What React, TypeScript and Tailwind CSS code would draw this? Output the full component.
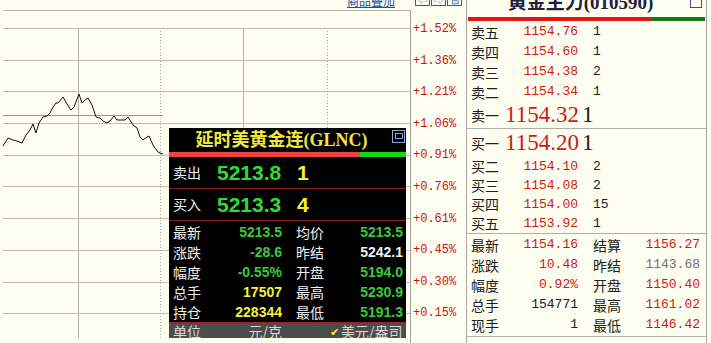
import React from "react";

const CJK = "font-['Noto_Sans_CJK_SC',sans-serif]";
const MONO = "font-['Liberation_Mono','Noto_Sans_CJK_SC',monospace]";

const axis = ["+1.52%", "+1.36%", "+1.21%", "+1.06%", "+0.91%", "+0.76%", "+0.61%", "+0.45%", "+0.30%", "+0.15%"];

const linePts =
  "3,146 8,138 13,140 17,141 22,143 26,135 30,130 33,124 36,133 39,123 43,117 47,116 50,113 53,107 56,103 58,103 63,97 67,104 71,110 74,107 79,94 82,103 85,100 88,98 92,105 96,117 100,118 103,121 107,123 110,121 114,116 117,120 125,120 128,117 133,125 137,128 140,137 143,140 147,137 149,136 153,145 155,148 158,152 160,153 163,154";

const gridY = [28.5, 60.5, 91.5, 123.5, 155.5, 186.5, 218.5, 250.5, 282.5, 313.5];

const asks = [
  ["卖五", "1154.76", "1"],
  ["卖四", "1154.60", "1"],
  ["卖三", "1154.38", "2"],
  ["卖二", "1154.34", "1"],
];
const bids = [
  ["买二", "1154.10", "2"],
  ["买三", "1154.08", "2"],
  ["买四", "1154.00", "15"],
  ["买五", "1153.92", "1"],
];

// [label, value, valueColor, label2, value2, value2Color]
const quote = [
  ["最新", "1154.16", "text-[#d01818]", "结算", "1156.27", "text-[#d01818]"],
  ["涨跌", "10.48", "text-[#d01818]", "昨结", "1143.68", "text-[#707070]"],
  ["幅度", "0.92%", "text-[#d01818]", "开盘", "1150.40", "text-[#d01818]"],
  ["总手", "154771", "text-[#202020]", "最高", "1161.02", "text-[#d01818]"],
  ["现手", "1", "text-[#202020]", "最低", "1146.42", "text-[#d01818]"],
];

const popStats = [
  ["最新", "5213.5", "text-[#3cc83c]", "均价", "5213.5", "text-[#3cc83c]"],
  ["涨跌", "-28.6", "text-[#3cc83c]", "昨结", "5242.1", "text-[#f0f0f0]"],
  ["幅度", "-0.55%", "text-[#3cc83c]", "开盘", "5194.0", "text-[#3cc83c]"],
  ["总手", "17507", "text-[#f4f040]", "最高", "5230.9", "text-[#3cc83c]"],
  ["持仓", "228344", "text-[#f4f040]", "最低", "5191.3", "text-[#3cc83c]"],
];

const Chart = () => (
  <svg width="410" height="333" viewBox="0 10 410 333" className="block shrink-0">
    <line x1="3" y1="10.5" x2="410" y2="10.5" stroke="#b8b8ac" />
    {gridY.map((y) => (
      <line key={y} x1="3" y1={y} x2="410" y2={y} stroke="#bdbdb0" />
    ))}
    <line x1="78.5" y1="28" x2="78.5" y2="338" stroke="#b4b4a8" />
    <line x1="243.5" y1="28" x2="243.5" y2="338" stroke="#b4b4a8" />
    <line x1="160.5" y1="28" x2="160.5" y2="338" stroke="#a8a8a0" strokeDasharray="1 2" />
    <line x1="327.5" y1="28" x2="327.5" y2="338" stroke="#a8a8a0" strokeDasharray="1 2" />
    <line x1="3" y1="115.5" x2="163" y2="115.5" stroke="#e48a10" />
    <polyline points={linePts} fill="none" stroke="#101010" strokeWidth="1" />
  </svg>
);

const Popup = () => (
  <div className={`absolute left-[169px] top-[128px] flex h-[210px] w-[237px] flex-col bg-black ${CJK}`}>
    <div className="relative flex h-[24px] shrink-0 items-center justify-center pr-[12px]">
      <span className="font-['Liberation_Serif','Noto_Sans_CJK_SC',serif] text-[18px] font-bold leading-none text-[#f0e838]">
        延时美黄金连(GLNC)
      </span>
      <div className="absolute right-[1px] top-[2px] flex h-[13px] w-[13px] items-start justify-center border border-[#8aa8d8] pt-[2px]">
        <div className="h-[6px] w-[8px] border border-[#8aa8d8]" />
      </div>
    </div>
    <div className="flex h-[5px] shrink-0">
      <div className="w-[191px] bg-[#f04444]" />
      <div className="flex-1 bg-[#14d814]" />
    </div>
    {[
      ["卖出", "5213.8", "1"],
      ["买入", "5213.3", "4"],
    ].map(([l, p, q]) => (
      <div key={l} className="flex h-[32px] shrink-0 items-center border-b border-[#902020] pl-[4px]">
        <span className="w-[44px] text-[14px] text-[#f0f0f0]">{l}</span>
        <span className="w-[80px] font-['Liberation_Sans',sans-serif] text-[21px] font-bold text-[#30dc30]">{p}</span>
        <span className="font-['Liberation_Sans',sans-serif] text-[21px] font-bold text-[#f4f030]">{q}</span>
      </div>
    ))}
    <div className="flex flex-col pt-[1px]">
      {popStats.map(([l, v, c, l2, v2, c2]) => (
        <div key={l} className="flex h-[20px] items-center pl-[4px] text-[14px]">
          <span className="w-[36px] text-[#f0f0f0]">{l}</span>
          <span className={`w-[73px] text-right font-['Liberation_Sans',sans-serif] font-bold ${c}`}>{v}</span>
          <span className="ml-[14px] w-[36px] text-[#f0f0f0]">{l2}</span>
          <span className={`w-[71px] text-right font-['Liberation_Sans',sans-serif] font-bold ${c2}`}>{v2}</span>
        </div>
      ))}
    </div>
    <div className="flex flex-1 items-start overflow-hidden border-t border-[#a02020] bg-[#4c4c4c] pl-[4px] text-[14px] leading-[17px] text-[#d8d8d8]">
      <span className="w-[36px]">单位</span>
      <span className="w-[73px] text-right">元/克</span>
      <span className="ml-[48px] w-[11px] text-[11px] text-[#f4f030]">✔</span>
      <span>美元/盎司</span>
    </div>
  </div>
);

const Book = () => (
  <div className={`flex w-[241px] shrink-0 flex-col border-x border-[#a8a8a0] text-[#202020] ${CJK}`}>
    <div className="relative flex h-[17px] shrink-0 justify-center overflow-hidden pr-[12px]">
      <span className="-mt-[7px] font-['Liberation_Serif','Noto_Sans_CJK_SC',serif] text-[19px] font-bold leading-[19px] text-[#20203a]">
        黄金主力(010590)
      </span>
      <div className="absolute right-[4px] top-[-4px] h-[12px] w-[12px] border border-[#505060]" />
    </div>
    <div className="mx-[1px] flex h-[4px] shrink-0">
      <div className="w-[184px] bg-[#e81414]" />
      <div className="flex-1 bg-[#187818]" />
    </div>
    <div className="flex flex-col border-b border-[#b0b0a8] pt-[1px] text-[14px]">
      {asks.map(([l, p, q]) => (
        <div key={l} className="flex h-[20px] items-center pl-[4px]">
          <span className="w-[34px]">{l}</span>
          <span className={`w-[73px] text-right text-[13px] text-[#d01818] ${MONO}`}>{p}</span>
          <span className={`ml-[15px] text-[13px] ${MONO}`}>{q}</span>
        </div>
      ))}
      <div className="flex h-[26px] items-center pl-[4px]">
        <span className="w-[34px]">卖一</span>
        <span className="font-['Liberation_Serif',serif] text-[23px] text-[#d01818]">1154.32</span>
        <span className="ml-[3px] font-['Liberation_Serif',serif] text-[23px]">1</span>
      </div>
    </div>
    <div className="flex flex-col border-b border-[#b0b0a8] text-[14px]">
      <div className="flex h-[28px] items-center pl-[4px]">
        <span className="w-[34px]">买一</span>
        <span className="font-['Liberation_Serif',serif] text-[23px] text-[#d01818]">1154.20</span>
        <span className="ml-[3px] font-['Liberation_Serif',serif] text-[23px]">1</span>
      </div>
      {bids.map(([l, p, q]) => (
        <div key={l} className="flex h-[19px] items-center pl-[4px]">
          <span className="w-[34px]">{l}</span>
          <span className={`w-[73px] text-right text-[13px] text-[#d01818] ${MONO}`}>{p}</span>
          <span className={`ml-[15px] text-[13px] ${MONO}`}>{q}</span>
        </div>
      ))}
    </div>
    <div className="flex flex-col border-b border-[#b0b0a8] pb-[1px] pt-[1px] text-[14px]">
      {quote.map(([l, v, c, l2, v2, c2]) => (
        <div key={l} className="flex h-[20px] items-center pl-[4px]">
          <span className="w-[34px]">{l}</span>
          <span className={`w-[73px] text-right text-[13px] ${MONO} ${c}`}>{v}</span>
          <span className="ml-[15px] w-[34px]">{l2}</span>
          <span className={`w-[73px] text-right text-[13px] ${MONO} ${c2}`}>{v2}</span>
        </div>
      ))}
    </div>
  </div>
);

export default function App() {
  return (
    <div className="relative flex h-[343px] w-[711px] overflow-hidden bg-[#fefef0]">
      <div className="flex w-[466px] shrink-0 flex-col">
        <div className="flex h-[10px] shrink-0 overflow-hidden pl-[347px]">
          <div className={`-mt-[7px] flex items-start ${CJK}`}>
            <span className="text-[12px] leading-[15px] text-[#2a4a9a] underline">商品叠加</span>
            <div className="ml-[20px] flex gap-[1px]">
              {["⇦", "⇨", "⊟"].map((g) => (
                <div key={g} className="flex h-[13px] w-[15px] items-center justify-center border border-[#3a5aa0] text-[10px] leading-none text-[#3a5aa0]">
                  {g}
                </div>
              ))}
            </div>
          </div>
        </div>
        <div className="flex flex-1">
          <Chart />
          <div className={`flex flex-1 flex-col border-l border-[#a0a098] pl-[2px] pt-[4px] text-[12px] text-[#c81414] ${MONO}`}>
            {axis.map((a) => (
              <div key={a} className="h-[31.6px] leading-[31.6px]">
                {a}
              </div>
            ))}
          </div>
        </div>
      </div>
      <Book />
      <Popup />
    </div>
  );
}
